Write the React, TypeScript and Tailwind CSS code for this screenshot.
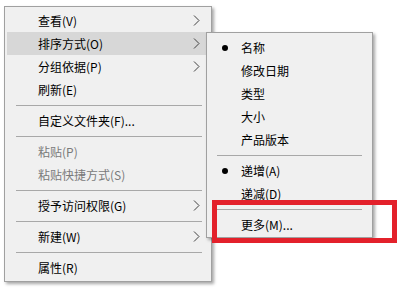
import React from 'react';

type Item = { label?: string; sep?: boolean; sub?: boolean; disabled?: boolean; active?: boolean; dot?: boolean };

const mainItems: Item[] = [
  { label: '查看(V)', sub: true },
  { label: '排序方式(O)', sub: true, active: true },
  { label: '分组依据(P)', sub: true },
  { label: '刷新(E)' },
  { sep: true },
  { label: '自定义文件夹(F)...' },
  { sep: true },
  { label: '粘贴(P)', disabled: true },
  { label: '粘贴快捷方式(S)', disabled: true },
  { sep: true },
  { label: '授予访问权限(G)', sub: true },
  { sep: true },
  { label: '新建(W)', sub: true },
  { sep: true },
  { label: '属性(R)' },
];

const sortItems: Item[] = [
  { label: '名称', dot: true },
  { label: '修改日期' },
  { label: '类型' },
  { label: '大小' },
  { label: '产品版本' },
  { sep: true },
  { label: '递增(A)', dot: true },
  { label: '递减(D)' },
  { sep: true },
  { label: '更多(M)...' },
];

function Chevron() {
  return (
    <svg width="7" height="11" viewBox="0 0 7 11" className="shrink-0">
      <polyline points="1,0.5 6,5.5 1,10.5" fill="none" stroke="#404040" strokeWidth="1" />
    </svg>
  );
}

function Separator({ inset }: { inset: string }) {
  return (
    <div className={`h-[8px] flex items-center ${inset}`}>
      <div className="h-px w-full bg-[#a8a8a8]" />
    </div>
  );
}

export default function App() {
  const font = { fontFamily: '"Noto Sans CJK SC", "Noto Sans", sans-serif' };
  return (
    <div className="relative w-[403px] h-[290px] bg-white overflow-hidden text-[12px] leading-none" style={font}>
      {/* main context menu */}
      <div className="ml-[4px] mt-[6px] w-[208px] border border-[#a0a0a0] bg-[#f0f0f0] pt-[2px] pb-[2px] shadow-[2px_2px_3px_rgba(0,0,0,0.35)]">
        {mainItems.map((it, i) =>
          it.sep ? (
            <Separator key={i} inset="ml-[11px] mr-[9px]" />
          ) : (
            <div
              key={i}
              className={`h-[23px] flex items-center pl-[33px] pr-[11px] ml-[2px] ${it.active ? 'bg-[#d7d7d7]' : ''} ${
                it.disabled ? 'text-[#7a7a7a]' : 'text-black'
              }`}
            >
              <span className="flex-1 -ml-[2px]">{it.label}</span>
              {it.sub && <Chevron />}
            </div>
          )
        )}
      </div>

      {/* sort submenu */}
      <div className="absolute left-[206px] top-[32px] w-[167px] border border-[#a0a0a0] bg-[#f0f0f0] pt-[3px] pb-[1px] shadow-[2px_2px_3px_rgba(0,0,0,0.35)]">
        {sortItems.map((it, i) =>
          it.sep ? (
            <Separator key={i} inset="ml-[10px] mr-[10px]" />
          ) : (
            <div key={i} className="h-[23px] flex items-center text-black">
              <span className="w-[34px] flex justify-center pl-[2px]">
                {it.dot && <span className="block w-[6px] h-[6px] rounded-full bg-black" />}
              </span>
              <span>{it.label}</span>
            </div>
          )
        )}
      </div>

      {/* red annotation frame */}
      <div className="absolute left-[212px] top-[200px] w-[185px] h-[43px] border-[5px] border-[#e3212b]" />
    </div>
  );
}
